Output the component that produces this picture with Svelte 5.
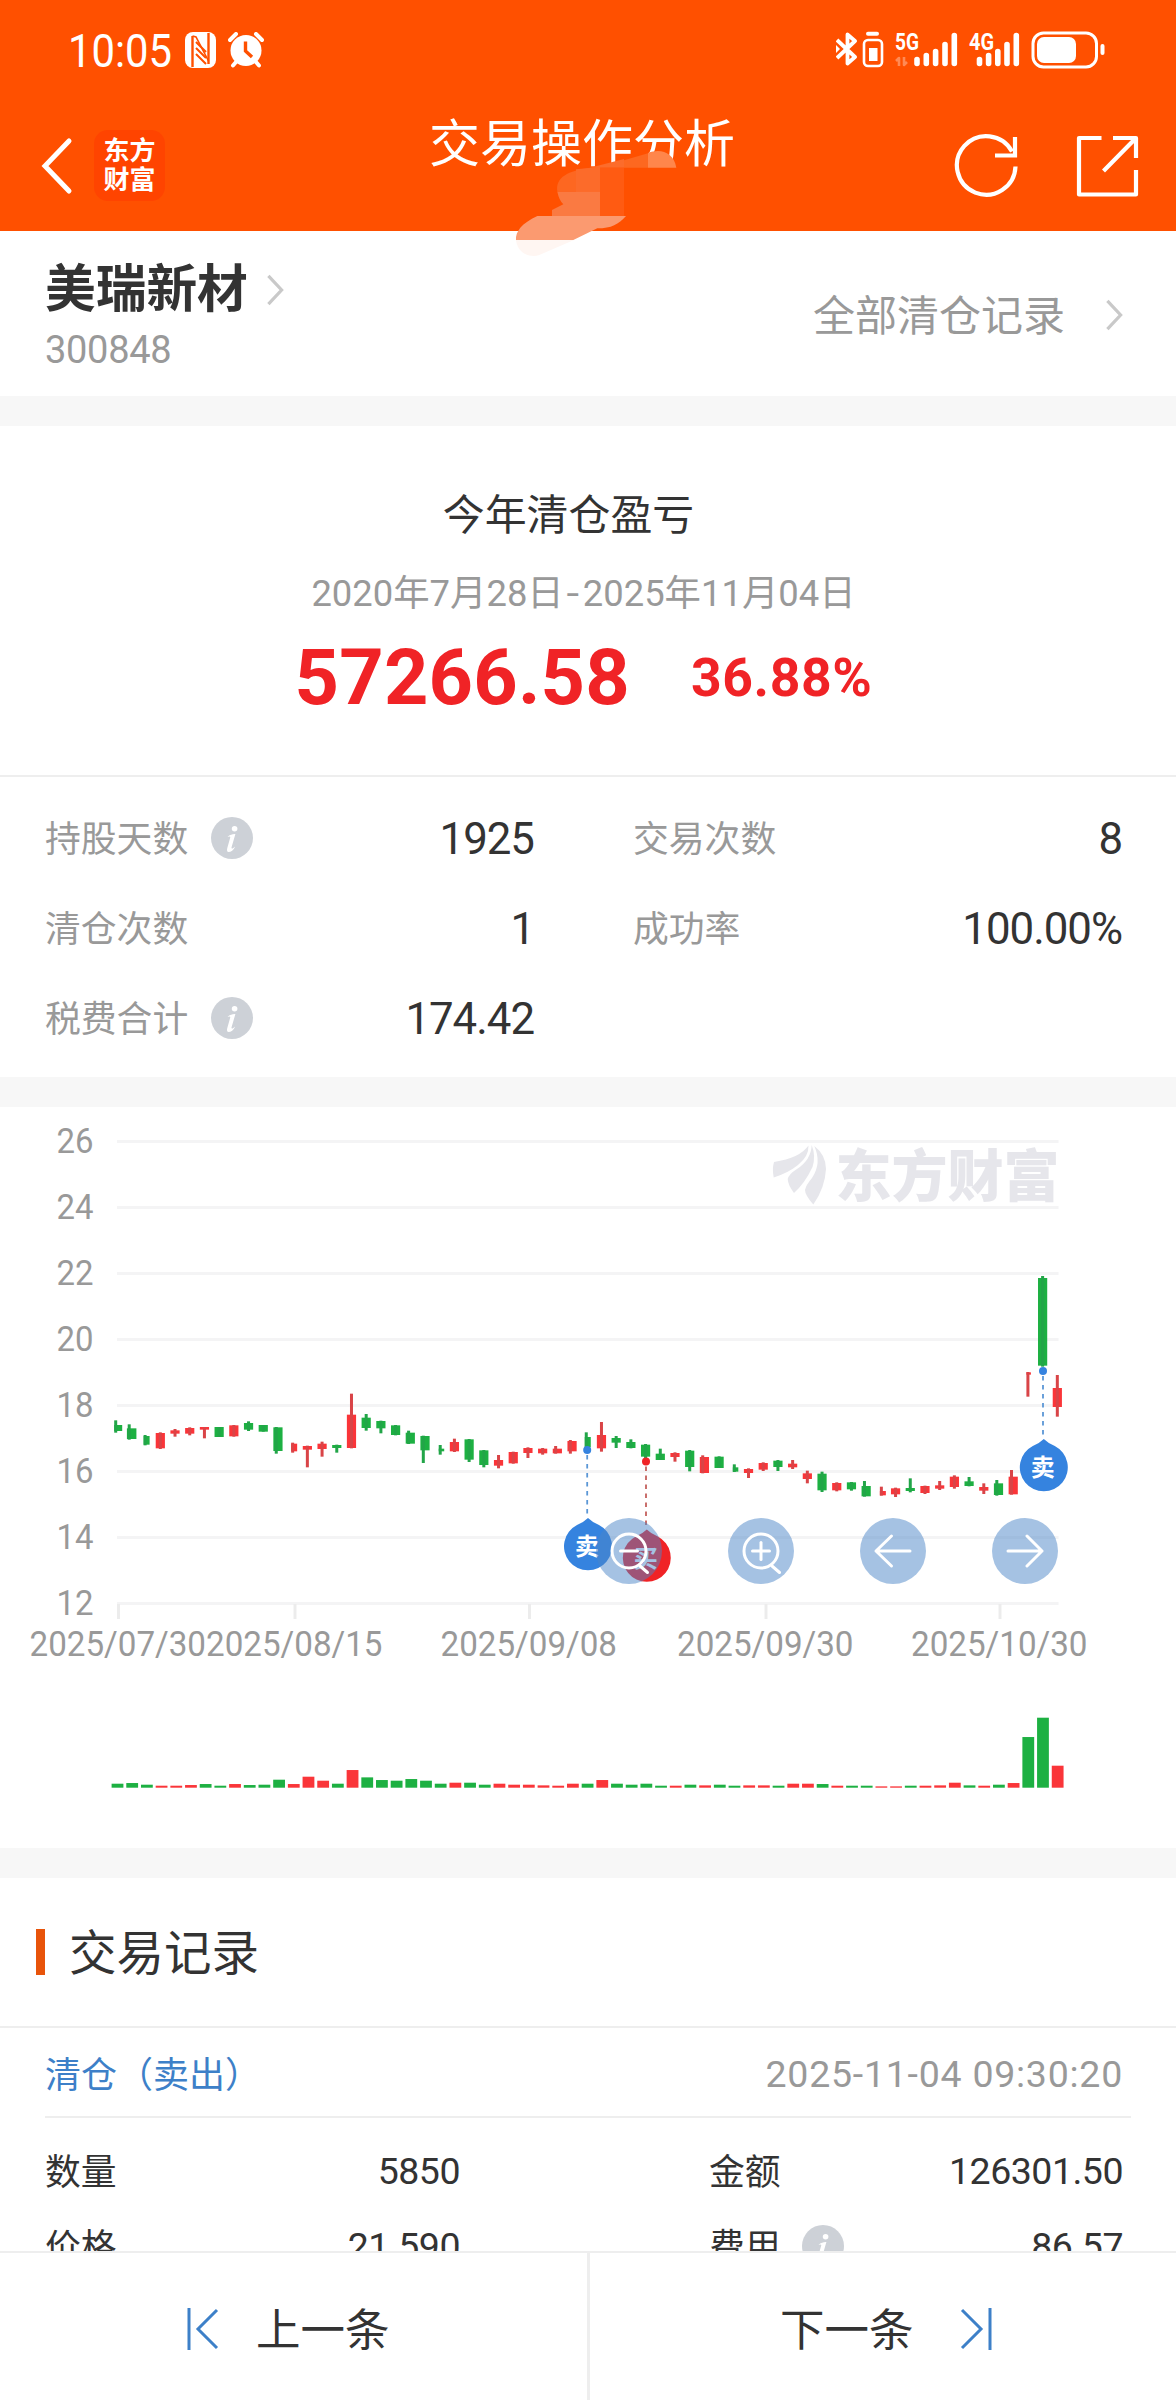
<script>
  const stats = [
    { label: '持股天数', value: '1925', info: true },
    { label: '交易次数', value: '8' },
    { label: '清仓次数', value: '1' },
    { label: '成功率', value: '100.00%' },
    { label: '税费合计', value: '174.42', info: true }
  ];

  const record = [
    { label: '数量', value: '5850' },
    { label: '金额', value: '126301.50' },
    { label: '价格', value: '21.590' },
    { label: '费用', value: '86.57', info: true }
  ];

  const prices = [26, 24, 22, 20, 18, 16, 14, 12];
  const dates = [
    { text: '2025/07/30', x: 118.5 },
    { text: '2025/08/15', x: 295 },
    { text: '2025/09/08', x: 529.5 },
    { text: '2025/09/30', x: 766 },
    { text: '2025/10/30', x: 1000 }
  ];

  // [direction, high, body top, body bottom, low]
  const candles = [
    ['g', 961, 975, 993, 998], ['g', 973, 985, 1017, 1019], ['g', 1005, 1008, 1034, 1036],
    ['r', 997, 999, 1045, 1047], ['r', 987, 991, 1001, 1010], ['r', 982, 984, 1001, 1006],
    ['r', 981, 981, 989, 1015], ['g', 981, 981, 1011, 1011], ['r', 975, 976, 1009, 1010],
    ['g', 964, 969, 989, 993], ['g', 975, 975, 995, 995], ['g', 981, 982, 1053, 1061],
    ['r', 1028, 1031, 1054, 1058], ['r', 1037, 1038, 1049, 1102], ['r', 1025, 1031, 1047, 1070],
    ['g', 1034, 1035, 1044, 1058], ['r', 881, 944, 1044, 1045], ['g', 942, 953, 984, 992],
    ['g', 962, 963, 985, 1000], ['g', 975, 976, 1005, 1006], ['g', 992, 998, 1031, 1032],
    ['g', 1007, 1008, 1051, 1089], ['g', 1035, 1046, 1054, 1064], ['r', 1016, 1026, 1054, 1056],
    ['g', 1017, 1018, 1079, 1086], ['g', 1050, 1051, 1095, 1102], ['r', 1065, 1080, 1097, 1105],
    ['r', 1055, 1056, 1090, 1091], ['r', 1042, 1044, 1059, 1074], ['r', 1044, 1046, 1060, 1064],
    ['r', 1038, 1046, 1060, 1061], ['r', 1020, 1023, 1054, 1061], ['g', 997, 1011, 1042, 1050],
    ['r', 966, 1005, 1045, 1055], ['g', 1008, 1014, 1028, 1044], ['g', 1018, 1026, 1044, 1045],
    ['g', 1032, 1034, 1070, 1080], ['g', 1046, 1061, 1080, 1080], ['r', 1057, 1059, 1071, 1085],
    ['g', 1050, 1052, 1101, 1114], ['r', 1066, 1071, 1119, 1120], ['g', 1069, 1070, 1104, 1104],
    ['g', 1093, 1102, 1115, 1116], ['r', 1105, 1107, 1119, 1134], ['r', 1087, 1089, 1109, 1113],
    ['g', 1080, 1082, 1101, 1113], ['r', 1080, 1091, 1102, 1107], ['r', 1112, 1120, 1137, 1150],
    ['g', 1115, 1121, 1171, 1176], ['r', 1147, 1149, 1171, 1174], ['g', 1146, 1147, 1168, 1172],
    ['g', 1143, 1158, 1189, 1190], ['r', 1160, 1173, 1186, 1187], ['r', 1163, 1165, 1183, 1191],
    ['g', 1135, 1164, 1173, 1177], ['r', 1157, 1158, 1179, 1182], ['r', 1143, 1156, 1166, 1170],
    ['r', 1126, 1130, 1161, 1166], ['g', 1131, 1144, 1158, 1159], ['r', 1150, 1161, 1172, 1182],
    ['g', 1140, 1150, 1185, 1187], ['r', 1110, 1130, 1183, 1184], ['r', 816, 817, 824, 890],
    ['g', 528, 534, 797, 800], ['r', 825, 864, 921, 950]
  ];

  // bodies that are drawn narrower than a full candle: index -> [left, right] from the centre
  const narrow = {
    0: [-2, 6], 1: [-4, 5.5], 2: [-2, 4], 12: [-1.5, 4.5], 22: [-1, 4.5],
    32: [-2, 4], 42: [-1, 4.5], 52: [-1, 5], 62: [-1.5, 3]
  };
  // wicks that sit on the left edge of their body
  const leftWick = [0, 1, 2, 11, 12, 20, 21, 22, 30, 31, 32, 40, 42, 51, 52, 60, 61, 62];

  const volumes = [
    'g12', 'g14', 'g9', 'r6', 'r6', 'r8', 'g11', 'g6', 'r11', 'g8', 'g9', 'g24', 'r11',
    'r33', 'r21', 'g12', 'r53', 'g31', 'g23', 'g21', 'g26', 'g21', 'g12', 'r15', 'g15', 'g9',
    'r12', 'r9', 'r9', 'r7', 'r6', 'r12', 'g12', 'r23', 'g12', 'g9', 'g12', 'g6', 'r6',
    'g9', 'r7', 'g9', 'g6', 'r7', 'r7', 'g6', 'r12', 'r12', 'g11', 'r6', 'g6', 'g6',
    'r4', 'r4', 'g6', 'r6', 'r7', 'r15', 'g7', 'r6', 'g9', 'r14', 'g152', 'g210', 'r66'
  ];

  const fills = { g: '#1db042', r: '#fa3539' };
  const gridY = (i) => 34.6 + i * 66;
  const y = (v) => v / 3 - 7;
  const cx = (i) => 116.2 + i * 14.705;
  const vx = (i) => 111.6 + i * 14.69;

  const pins = [
    { kind: 'sell', text: '卖', x: 587.2, dot: 343, top: 411 },
    { kind: 'buy', text: '买', x: 646, dot: 354.5, top: 422.5 },
    { kind: 'sell', text: '卖', x: 1043, dot: 264, top: 332 }
  ];
  const pinFill = { sell: '#3583df', buy: '#f02326' };
  const controls = [629, 761, 893, 1025];
</script>

{#snippet chevron()}
  <svg class="chevron" width="20" height="36" viewBox="0 0 20 36">
    <path d="M3 3 L17 18 L3 33" fill="none" stroke="#c9c9c9" stroke-width="3.4" />
  </svg>
{/snippet}

{#snippet infoIcon()}
  <svg class="info" width="42" height="42" viewBox="0 0 42 42">
    <circle cx="21" cy="21" r="21" fill="#cdd1d7" />
    <ellipse cx="23.6" cy="11.8" rx="2.8" ry="2.7" fill="#fff" />
    <path d="M16.5 20 C19 17.5 22 16.8 24.4 17 L20.5 30.5 C20.3 32.3 22 31.5 24.2 29.4 C22.5 33 20 35 17.6 35 C15.8 35 15.8 33 16.3 31 L19.3 20.3 C19.2 19.2 18 19.6 16.5 20 Z" fill="#fff" />
  </svg>
{/snippet}

<div class="screen">
  <header>
    <div class="status">
      <svg class="clock" width="104" height="60" viewBox="0 0 104 60">
        <text x="0" y="46.5" font-size="46" textLength="104" lengthAdjust="spacingAndGlyphs" fill="#fff">10:05</text>
      </svg>
      <svg class="nfc" width="32" height="36" viewBox="0 0 32 36">
        <rect width="31" height="36" rx="8" fill="#fff" />
        <path d="M7.500 4 V35 M23.500 1 V32" stroke="#ff5000" stroke-width="2.4" />
        <path d="M7.500 4 L11 5 L23.500 29" fill="none" stroke="#ff5000" stroke-width="1.6" />
        <path d="M11 10 L21 20 M11 16 L21 26 M11 22 L21 32" stroke="#ff5000" stroke-width="2" />
      </svg>
      <svg class="alarm" width="36" height="36" viewBox="0 0 36 36">
        <circle cx="18" cy="18.5" r="15.5" fill="#fff" />
        <path d="M2 8 L8 2 M34 8 L28 2 M8 30 L5 33.5 M28 30 L31 33.5" stroke="#fff" stroke-width="4" stroke-linecap="round" />
        <path d="M17.5 9.5 V19 L24 25" fill="none" stroke="#ff5000" stroke-width="3.4" />
      </svg>
      <span class="spring"></span>
      <svg class="signals" width="270" height="40" viewBox="0 0 270 40">
        <g fill="none" stroke="#fff" stroke-width="3.800" stroke-linejoin="round">
          <path d="M1 10 L19 27 L11.5 33.5 V4.500 L19 11 L1 28" />
          <path d="M0 15 L4 19 L0 23 Z" fill="#fff" stroke="none" />
          <path d="M32 3.800 H41" stroke-width="4" stroke-linecap="round" />
          <rect x="28" y="10" width="18" height="26" rx="4" stroke-width="2.6" />
          <rect x="33" y="18" width="8.500" height="13" fill="#fff" stroke="none" />
          <path d="M63 36 V28 L60 31 M68 27 V35 L71 32" stroke="#ff8a55" stroke-width="2.600" />
          <path d="M81 29.500 V33.500 M90.300 25.500 V33.500 M99.600 21.500 V33.500 M109 14.500 V33.500 M118.300 5.500 V33.500" stroke-width="5.600" stroke-linecap="round" />
          <path d="M143.500 29.500 V33.500 M152.600 25.500 V33.500 M161.800 21.500 V33.500 M171 14.500 V33.500 M180.300 5.500 V33.500" stroke-width="5.600" stroke-linecap="round" />
          <rect x="197" y="3" width="63.500" height="34" rx="10.500" stroke-width="3" />
          <rect x="201" y="7" width="39" height="26" rx="7" fill="#fff" stroke="none" />
          <path d="M266.500 16 V23" stroke-width="4" stroke-linecap="round" />
        </g>
        <g class="net" fill="#fff" font-size="23">
          <text x="59" y="20" textLength="24" lengthAdjust="spacingAndGlyphs">5G</text>
          <text x="133" y="20" textLength="25" lengthAdjust="spacingAndGlyphs">4G</text>
        </g>
      </svg>
    </div>
    <nav>
      <svg class="back" width="34" height="60" viewBox="0 0 34 60">
        <path d="M29 5 L5 30 L29 55" fill="none" stroke="#fff" stroke-width="5" stroke-linecap="round" />
      </svg>
      <div class="logo">
        <span>东方</span>
        <span>财富</span>
      </div>
      <h1>交易操作分析</h1>
      <svg class="refresh" width="66" height="66" viewBox="0 0 66 66">
        <g fill="none" stroke="#fff" stroke-width="4.200">
          <path d="M61.500 33.500 A29.300 29.300 0 1 1 58 18.500" />
          <path d="M61 4 V22.500 H41" />
        </g>
      </svg>
      <svg class="share" width="64" height="64" viewBox="0 0 64 64">
        <path d="M26.500 4 H4 V60.500 H61 V36 M38 4 H61 V24 M59 6 L28.500 37" fill="none" stroke="#fff" stroke-width="4.200" stroke-linejoin="round" />
      </svg>
    </nav>
    <svg class="smear" width="200" height="130" viewBox="0 0 600 390">
      <path d="M172 170 C165 125 205 108 270 98 L300 98 V170 Z" fill="#fd6721" />
      <path d="M228 103 L300 96 V170 H228 Z" fill="#fc6b2a" />
      <path d="M372 76 L444 55 V98 H372 Z" fill="#fd6820" />
      <path d="M270 98 L372 72 V98 H300 Z" fill="#fc6c2b" />
      <path d="M444 54 C480 40 520 50 529 98 H444 Z" fill="#ff864b" />
      <path d="M300 98 H372 V243 H300 Z" fill="#ff5b12" />
      <path d="M172 170 H300 V243 H156 V225 L190 208 Q177 195 172 170 Z" fill="#fa7a42" />
      <path d="M48 315 C46 290 65 265 112 243 H378 C355 268 335 280 292 280 L220 315 Z" fill="#fb9a70" />
      <path d="M48 315 H222 L118 360 C90 370 52 355 48 315 Z" fill="#fff6f2" />
    </svg>
  </header>

  <main>
    <section class="stock">
      <div>
        <h2>美瑞新材 {@render chevron()}</h2>
        <p class="code">300848</p>
      </div>
      <div class="all"><span>全部清仓记录</span> {@render chevron()}</div>
    </section>

    <section class="profit">
      <p class="title">今年清仓盈亏</p>
      <p class="range">2020年7月28日<i>-</i>2025年11月04日</p>
      <div class="amount"><strong>57266.58</strong><b>36.88%</b></div>
    </section>

    <section class="stats">
      {#each stats as s}
        <div class="stat">
          <span>{s.label}</span>
          {#if s.info}{@render infoIcon()}{/if}
          <em>{s.value}</em>
        </div>
      {/each}
    </section>

    <section class="chart">
      <svg width="1176" height="741" viewBox="0 0 1176 741">
        {#each prices as p, i}
          <text x="56.500" y={gridY(i) + 11.3} font-size="35" textLength="37" lengthAdjust="spacingAndGlyphs" fill="#999">{p}</text>
          <line x1="117" x2="1058.500" y1={gridY(i)} y2={gridY(i)} stroke="#f4f4f5" stroke-width="3" />
        {/each}
        {#each dates as d}
          <line x1={d.x} x2={d.x} y1="497" y2="512" stroke="#ececec" stroke-width="3" />
          <text x={d.x - 89} y="549" font-size="35.500" textLength="176.500" lengthAdjust="spacingAndGlyphs" fill="#999">{d.text}</text>
        {/each}

        <g fill="#e6e6eb">
          <path d="M774 55 Q800 51 808.500 38.500 Q809 49 798 58 Q788 66 773.700 70.500 Q772 62 774 55 Z" />
          <path d="M811.700 38 Q816 49 812.500 60 Q805 76 794 86 Q788 78 787.700 72 Q789 67 797 62 Q811 53 811.700 38 Z" />
          <path d="M814.300 39 Q826 48 826 62 Q825 81 813.300 97.500 Q805 88 805 83 Q806 78 812 71 Q822 56 814.300 39 Z" />
          <text class="brand" x="835.500" y="88.500" font-size="56" textLength="224">东方财富</text>
        </g>

        {#each candles as [dir, high, top, bottom, low], i}
          {@const [l, r] = narrow[i] ?? [-4.6, 4.6]}
          {@const wick = leftWick.includes(i) ? cx(i) + Math.max(l, -3.2) : cx(i) - 1.5}
          <rect x={cx(i) + l} y={y(top)} width={r - l} height={(bottom - top) / 3} fill={fills[dir]} />
          <rect x={wick} y={y(high)} width="3" height={(low - high) / 3} fill={dir === 'g' ? '#22a548' : '#d94447'} />
        {/each}

        {#each volumes as v, i}
          {@const h = Number(v.slice(1)) / 3}
          <rect x={vx(i)} y={680.7 - h} width="11.800" height={h} fill={fills[v[0]]} />
        {/each}

        {#each pins as pin}
          <line x1={pin.x} x2={pin.x} y1={pin.dot + 5} y2={pin.top - 2} stroke={pin.kind === 'sell' ? '#5b97d6' : '#c4605c'} stroke-width="1.800" stroke-dasharray="4.500 4.500" />
          <circle cx={pin.x} cy={pin.dot} r="4" fill={pinFill[pin.kind]} />
          <g transform="translate({pin.x + 0.8} {pin.top})">
            <path d="M0 0 Q4 4 11 7 A24 24 0 1 1 -11 7 Q-4 4 0 0 Z" fill={pinFill[pin.kind]} />
            <text class="mark" x="-1" y="37" font-size="24" text-anchor="middle" fill="#fff">{pin.text}</text>
          </g>
        {/each}

        {#each controls as x, i}
          <g transform="translate({x} 444)" fill="none" stroke="#fff" stroke-width="3" stroke-linecap="round" stroke-linejoin="round">
            <circle r="33" fill="#4b85c7" fill-opacity=".5" stroke="none" />
            {#if i < 2}
              <circle r="17" cy="0" />
              <path d="M-8.500 0 H8.500 M11 15 L18.500 21.500" />
              {#if i === 1}<path d="M0 -8.500 V8.500" />{/if}
            {:else if i === 2}
              <path d="M17 0 H-17 M-1.500 -15 L-17 0 L-1.500 15" />
            {:else}
              <path d="M-17 0 H17 M2 -15 L17 0 L2 15" />
            {/if}
          </g>
        {/each}
      </svg>
    </section>

    <section class="records">
      <h3><span>交易记录</span></h3>
      <div class="record-head">
        <span class="kind">清仓（卖出）</span>
        <time>2025-11-04 09:30:20</time>
      </div>
      <div class="record">
        {#each record as r}
          <div class="field">
            <span>{r.label}</span>
            {#if r.info}{@render infoIcon()}{/if}
            <em>{r.value}</em>
          </div>
        {/each}
      </div>
    </section>
  </main>

  <footer>
    <button class="prev">
      <svg width="32" height="44" viewBox="0 0 32 44">
        <path d="M2 1 V43 M30 3 L11 22 L30 41" fill="none" stroke="#3d80c8" stroke-width="3" />
      </svg>
      <span>上一条</span>
    </button>
    <button class="next">
      <span>下一条</span>
      <svg width="32" height="44" viewBox="0 0 32 44">
        <path d="M30 1 V43 M2 3 L21 22 L2 41" fill="none" stroke="#3d80c8" stroke-width="3" />
      </svg>
    </button>
  </footer>
</div>

<style>
  :global(body) {
    margin: 0;
    background: #fff;
  }
  .screen {
    width: 1176px;
    height: 2400px;
    display: flex;
    flex-direction: column;
    overflow: hidden;
    background: #fff;
    color: #333;
    font-family: Roboto, "Noto Sans CJK SC", sans-serif;
  }
  svg {
    display: block;
    flex: none;
  }
  h1, h2, h3, p {
    margin: 0;
    font-weight: 400;
  }
  em, i {
    font-style: normal;
  }

  header {
    position: relative;
    flex: none;
    height: 231px;
    background: #ff5000;
    color: #fff;
  }
  .status {
    display: flex;
    align-items: center;
    height: 100px;
    padding: 0 70px 0 68px;
    box-sizing: border-box;
  }
  .clock {
    overflow: visible;
  }
  .nfc {
    margin-left: 13px;
  }
  .alarm {
    margin-left: 11px;
  }
  .spring {
    flex: 1;
  }
  .net {
    font-weight: 700;
  }
  nav {
    display: flex;
    align-items: center;
    height: 131px;
    padding: 0 37px 0 40px;
  }
  .logo {
    display: flex;
    flex-direction: column;
    align-items: center;
    justify-content: center;
    width: 71px;
    height: 71px;
    margin-left: 20px;
    border-radius: 14px;
    background: #ff4400;
    font-size: 26px;
    font-weight: 700;
    line-height: 29px;
  }
  h1 {
    align-self: flex-start;
    margin: 15px 0 0 264px;
    font-size: 51px;
    line-height: 60px;
  }
  .refresh {
    margin-left: auto;
    margin-right: 55px;
  }
  .smear {
    position: absolute;
    left: 500px;
    top: 135px;
  }

  main {
    flex: 1;
    min-height: 0;
    overflow: hidden;
  }
  .stock {
    display: flex;
    justify-content: space-between;
    height: 165px;
    padding: 0 52px 0 45px;
    border-bottom: 30px solid #f7f7f7;
  }
  h2 {
    display: flex;
    align-items: center;
    gap: 17px;
    height: 60px;
    margin-top: 29px;
    font-size: 50.7px;
    font-weight: 700;
    line-height: 60px;
  }
  .code {
    font-size: 38px;
    letter-spacing: -0.3px;
    line-height: 40px;
    margin-top: 10px;
    color: #999;
  }
  .all {
    display: flex;
    align-items: center;
    gap: 39px;
    height: 167px;
    font-size: 42px;
    color: #999;
  }
  .all span {
    margin-top: -4px;
  }
  .chevron {
    height: 34px;
  }

  .profit {
    display: flex;
    flex-direction: column;
    align-items: center;
    height: 349px;
    border-bottom: 2px solid #eee;
  }
  .title {
    margin-top: 62px;
    padding-right: 39px;
    font-size: 41.9px;
    line-height: 56px;
  }
  .range {
    margin-top: 26px;
    padding-right: 9px;
    font-size: 36.4px;
    line-height: 48px;
    color: #999;
  }
  .range i {
    display: inline-block;
    margin: 0 3px;
    transform: scaleX(1.25);
    padding: 0 2px 0 1px;
  }
  .amount {
    display: flex;
    align-items: center;
    gap: 61px;
    margin-top: 11px;
    padding-right: 9px;
    color: #f02326;
    line-height: 98px;
  }
  .amount strong {
    font-size: 77.5px;
    letter-spacing: 0.2px;
  }
  .amount b {
    font-size: 53.5px;
    letter-spacing: 0.6px;
  }

  .stats {
    display: grid;
    grid-template-columns: 489px 489px;
    column-gap: 99px;
    grid-auto-rows: 90px;
    height: 300px;
    padding: 16px 53px 0 45px;
    box-sizing: border-box;
  }
  .stat, .field {
    display: flex;
    align-items: center;
    font-size: 35.8px;
    color: #999;
  }
  .stat span, .field span {
    margin-top: -4px;
  }
  .info {
    margin-left: 23px;
  }
  .stat em {
    margin: 2px 0 0 auto;
    font-size: 43.8px;
    letter-spacing: -1px;
    color: #333;
  }

  .chart {
    border-top: 30px solid #f7f7f7;
    border-bottom: 30px solid #f7f7f7;
    height: 741px;
  }
  .brand {
    font-family: "Noto Sans CJK SC", sans-serif;
    font-weight: 900;
  }
  .mark {
    font-family: "Noto Sans CJK SC", sans-serif;
    font-weight: 700;
  }

  h3 {
    display: flex;
    align-items: center;
    height: 148px;
    padding-left: 36px;
    font-size: 47.5px;
    border-bottom: 2px solid #eee;
  }
  h3 span {
    margin-top: -5px;
  }
  h3::before {
    content: '';
    width: 9px;
    height: 46px;
    margin-right: 24px;
    background: #e8540a;
  }
  .record-head {
    display: flex;
    align-items: center;
    justify-content: space-between;
    height: 88px;
    margin: 0 45px;
    padding-right: 8px;
    border-bottom: 2px solid #eee;
  }
  .kind {
    margin-top: -1px;
    font-size: 36px;
    color: #3d80c8;
  }
  time {
    margin-top: 3px;
    font-size: 37.5px;
    letter-spacing: 0.75px;
    color: #999;
  }
  .record {
    display: grid;
    grid-template-columns: 415px 414px;
    column-gap: 249px;
    grid-auto-rows: 75px;
    padding: 15px 53px 0 45px;
  }
  .field {
    color: #333;
  }
  .field .info, .field :global(.info) {
    margin-left: 21px;
  }
  .field em {
    margin-left: auto;
    font-size: 37.5px;
    letter-spacing: -0.5px;
  }

  footer {
    flex: none;
    display: flex;
    height: 149px;
    box-sizing: border-box;
    border-top: 2px solid #eee;
    background: #fff;
  }
  button {
    display: flex;
    align-items: center;
    width: 588px;
    padding: 4px 0 0;
    border: 0;
    background: none;
    color: #333;
    font: inherit;
    font-size: 44.5px;
  }
  button span {
    margin-top: -5px;
  }
  .prev {
    gap: 37px;
    padding-left: 187px;
    width: 590px;
    box-sizing: border-box;
    border-right: 3px solid #eee;
  }
  .next {
    gap: 46px;
    width: 586px;
    box-sizing: border-box;
    padding-left: 190px;
  }
</style>
